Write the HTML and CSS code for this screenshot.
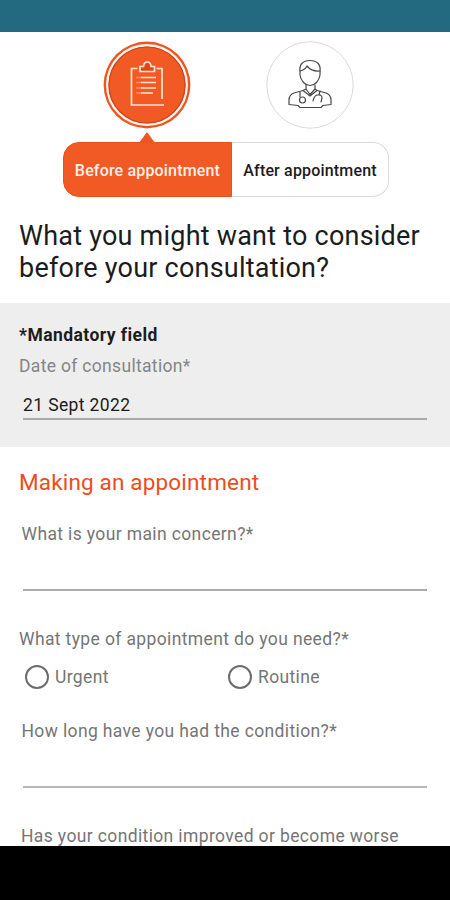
FILE: index.html
```html
<!DOCTYPE html>
<html lang="en">
<head>
    <meta charset="UTF-8">
    <meta name="viewport" content="width=device-width, initial-scale=1.0">
    <title>Before appointment</title>
    <link rel="stylesheet" href="styles.css">
</head>
<body>
    <div class="status-bar"></div>
    <main class="screen">
        <div class="steps">
            <svg class="step-icon" viewBox="0 0 88 88">
                <circle cx="44" cy="44" r="43.4" fill="#ec5522"/>
                <circle cx="44" cy="44" r="39.8" fill="#f15a24" stroke="#fff3ea" stroke-width="2.4"/>
                <circle cx="44" cy="44" r="38" fill="none" stroke="#c9471b" stroke-width="1.2"/>
                <g fill="none" stroke="#ffe3d3" stroke-width="1.7">
                    <path d="M34.500 27.500H28.500V64H61M53.500 27.500H59V58"/>
                    <path d="M37 30.500V25.500H40.500Q41 21 44.300 21T48 25.500H51.500V30.500Z" fill="#e0451c"/>
                    <path d="M38 36.500H53M38 41.500H53M38 47H53M38 52H50"/>
                    <path d="M33 36.500H38M33 41.500H38M33 47H38M33 52H38" stroke="#f58d63"/>
                </g>
            </svg>
            <svg class="step-icon" viewBox="0 0 88 88">
                <circle cx="44" cy="44" r="43.200" fill="#fff" stroke="#d8dcd8"/>
                <g fill="none" stroke="#484848" stroke-width="1.200" stroke-linecap="round" stroke-linejoin="round">
                    <path d="M34 31C33 23 37 19.500 44 19.500S55 23 54 31V34C53 40 49 44.500 44 44.500S35 40 34 34Z"/>
                    <path d="M34 30Q39 29 41 25Q46 31 54 30"/>
                    <path d="M40 44V48L44 53.500L49 48V44M40 48L37 49.500L44 55L51 49.500L49 48"/>
                    <path d="M37 49.500L28 52Q23 54 23 59V63.500L32 64.500L34 66.500H55L57 64.500L65 63.500V59Q65 54 60 52L51 49.500"/>
                    <path d="M34 51V56M47 60Q48 55 51 54Q56 53 56 57L55 61M54 50L53 54"/>
                    <circle cx="36.500" cy="59" r="3"/>
                </g>
            </svg>
        </div>
        <div class="tabs">
            <div class="tab active">Before appointment</div>
            <div class="tab after">After appointment</div>
        </div>
        <h1>What you might want to consider<br>before your consultation?</h1>

        <section class="date-section">
            <p class="mandatory">*Mandatory field</p>
            <p class="date-label">Date of consultation*</p>
            <div class="date-value">21 Sept 2022</div>
        </section>

        <section class="form">
            <h2>Making an appointment</h2>
            <div class="field concern">What is your main concern?*</div>
            <p class="question">What type of appointment do you need?*</p>
            <div class="options">
                <div class="option"><span class="radio"></span><span>Urgent</span></div>
                <div class="option"><span class="radio"></span><span>Routine</span></div>
            </div>
            <div class="field condition">How long have you had the condition?*</div>
            <p class="worse">Has your condition improved or become worse</p>
        </section>
    </main>
    <div class="nav-bar"></div>
</body>
</html>
```
FILE: styles.css
```css
body {
    font-family: Roboto, 'Liberation Sans', sans-serif;
    margin: 0;
    height: 900px;
    display: flex;
    flex-direction: column;
    overflow: hidden;
    background: #fff;
    color: #1c1c1c;
}

h1, h2, p {
    margin: 0;
    font-weight: 400;
    white-space: nowrap;
}

/* Bars at the top and the bottom of the screen */
.status-bar {
    flex: none;
    height: 32px;
    background: #236a80;
}

.nav-bar {
    flex: none;
    height: 54px;
    background: #000;
}

.screen {
    height: 814px;
    overflow: hidden;
}

/* Step icons */
.steps {
    display: flex;
    gap: 75px;
    padding: 9px 0 0 103px;
}

.step-icon {
    display: block;
    width: 88px;
    height: 88px;
}

/* Tabs */
.tabs {
    display: flex;
    width: 326px;
    height: 55px;
    margin: 13px 0 0 63px;
}

.tab {
    position: relative;
    box-sizing: border-box;
    line-height: 56px;
    text-align: center;
    font-size: 16px;
    font-weight: 500;
    letter-spacing: 0.17px;
    white-space: nowrap;
}

.active {
    width: 169px;
    background: #f15a24;
    border: 1px solid #e8501d;
    border-radius: 16px 0 0 16px;
    color: #fff1ea;
}

/* Pointer up to the selected step */
.active::before {
    content: "";
    position: absolute;
    left: 75px;
    top: -11px;
    border: solid transparent;
    border-width: 0 8px 11px;
    border-bottom-color: #ec5522;
}

.after {
    width: 157px;
    border: 1px solid #d9d9d9;
    border-left: none;
    border-radius: 0 16px 16px 0;
}

h1 {
    margin: 23px 0 0 19px;
    font-size: 27px;
    line-height: 32px;
    letter-spacing: 0.22px;
}

/* Date */
.date-section {
    box-sizing: border-box;
    height: 144px;
    margin-top: 19px;
    padding: 20px 23px 0 19px;
    background: #eee;
    font-size: 17.5px;
    line-height: 24px;
    letter-spacing: 0.38px;
}

.mandatory {
    font-weight: 700;
    letter-spacing: 0.44px;
}

.date-label {
    margin-top: 7px;
    color: #858585;
    letter-spacing: 0.32px;
}

.date-value {
    margin: 15px 0 0 4px;
    height: 25px;
    border-bottom: 2px solid #aaa;
}

/* Form */
.form {
    padding: 20px 23px 0 19px;
    color: #757575;
    font-size: 17.5px;
    line-height: 24px;
    letter-spacing: 0.37px;
}

h2 {
    font-size: 22.5px;
    line-height: 30px;
    letter-spacing: 0.17px;
    color: #ec4d20;
}

.field {
    box-sizing: border-box;
    height: 69px;
    margin-left: 4px;
    border-bottom: 2px solid #aaa;
    text-indent: -1.5px;
}

.concern {
    margin-top: 25px;
}

.question {
    margin-top: 36px;
}

.options {
    display: flex;
    margin: 13px 0 0 6px;
}

.option {
    flex: none;
    display: flex;
    align-items: center;
    gap: 6px;
    width: 203px;
    height: 26px;
}

.option + .option {
    width: 120px;
}

.radio {
    box-sizing: border-box;
    width: 24px;
    height: 24px;
    border: 2px solid #6c6c6c;
    border-radius: 50%;
}

.condition {
    margin-top: 29px;
    border-bottom-color: #b8b8b8;
}

.worse {
    margin: 36px 0 0 2px;
}
```
